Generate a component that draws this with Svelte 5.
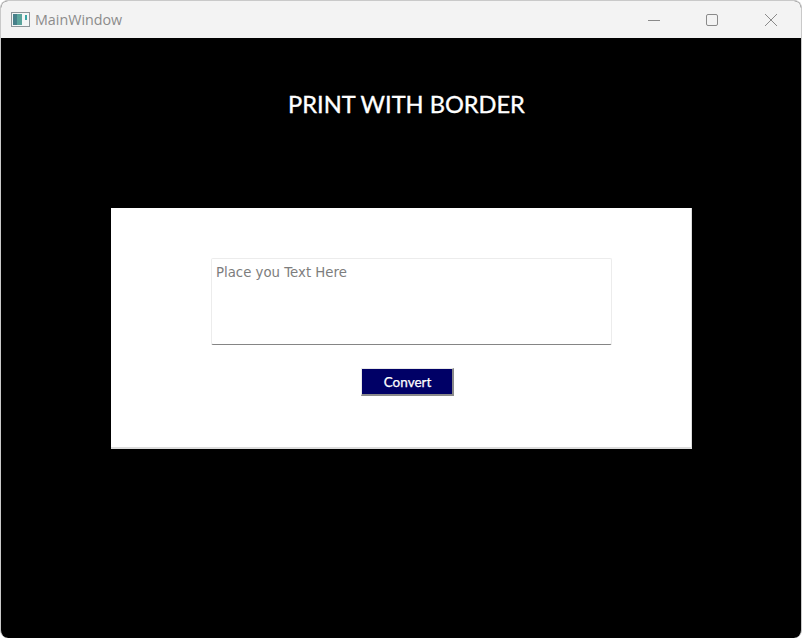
<script>
  let text = "";
</script>

<div class="window">
  <header class="titlebar">
    <svg class="app-icon" width="20" height="16" viewBox="0 0 20 16">
      <rect x="0.5" y="0.5" width="18" height="14" fill="#f4f6f6" stroke="#8d9599" />
      <rect x="2" y="2" width="9" height="11" fill="#5aa49c" />
      <rect x="2" y="2" width="4" height="11" fill="#47808a" />
      <rect x="14" y="3" width="2" height="5" fill="#3aa6a6" />
    </svg>
    <span class="title">MainWindow</span>
    <div class="controls">
      <svg width="14" height="14" viewBox="0 0 14 14">
        <path d="M1 7.5h12" stroke="#8a8a8a" fill="none" />
      </svg>
      <svg width="14" height="14" viewBox="0 0 14 14">
        <rect x="1.5" y="1.5" width="11" height="11" rx="1.5" stroke="#8a8a8a" fill="none" />
      </svg>
      <svg class="close" width="14" height="14" viewBox="0 0 14 14">
        <path d="M1 1l12 12M13 1L1 13" stroke="#8a8a8a" fill="none" />
      </svg>
    </div>
  </header>

  <main class="content">
    <h1>PRINT WITH BORDER</h1>
    <section class="card">
      <textarea bind:value={text} placeholder="Place you Text Here"></textarea>
      <button type="button">Convert</button>
    </section>
  </main>
</div>

<style>
  :global(body) {
    background: #fff;
  }

  .window {
    width: 802px;
    height: 638px;
    box-sizing: border-box;
    display: flex;
    flex-direction: column;
    overflow: hidden;
    border-radius: 8px;
    border: 1px solid #c9c9c9;
    border-bottom: 0;
    background: #000;
    font-family: Lato, "Liberation Sans", sans-serif;
  }

  .titlebar {
    height: 37px;
    flex: none;
    display: flex;
    align-items: center;
    padding-left: 10px;
    background: #f3f3f3;
  }

  .app-icon {
    margin-right: 4px;
  }

  .title {
    font-family: "Open Sans", "Liberation Sans", sans-serif;
    font-size: 14.3px;
    color: #8c8c8c;
  }

  .controls {
    margin-left: auto;
    margin-right: 23px;
    display: flex;
    gap: 44px;
  }

  .close {
    margin-left: 1px;
  }

  .content {
    flex: 1;
    display: flex;
    flex-direction: column;
    align-items: flex-start;
  }

  h1 {
    margin: 51px 0 0;
    width: 100%;
    padding-left: 11px;
    box-sizing: border-box;
    text-align: center;
    font-size: 23.6px;
    line-height: 30px;
    font-weight: 400;
    -webkit-text-stroke: 0.35px #fff;
    color: #fff;
  }

  .card {
    margin: 89px 0 0 110px;
    width: 581px;
    height: 241px;
    box-sizing: border-box;
    padding: 50px 0 0 100px;
    display: flex;
    flex-direction: column;
    align-items: flex-start;
    background: #fff;
    border-right: 1px solid #dcdcdc;
    border-bottom: 2px solid #dcdcdc;
  }

  textarea {
    width: 401px;
    height: 87px;
    box-sizing: border-box;
    flex: none;
    padding: 6px 4px 4px;
    resize: none;
    outline: none;
    border: 1px solid #ececec;
    border-bottom: 1px solid #858585;
    border-radius: 2px;
    font-family: "DejaVu Sans", sans-serif;
    font-size: 13.3px;
  }

  textarea::placeholder {
    color: #7d7d7d;
    opacity: 1;
  }

  button {
    margin: 23px 0 0 150px;
    width: 93px;
    height: 28px;
    box-sizing: border-box;
    padding: 0 0 0 1px;
    border: 1px solid #e8e8e8;
    border-right: 2px solid #8a8a8a;
    border-bottom: 2px solid #8a8a8a;
    border-radius: 0;
    background: #000066;
    color: #fff;
    font-family: inherit;
    font-size: 13.5px;
    font-weight: 400;
    -webkit-text-stroke: 0.25px #fff;
  }
</style>
